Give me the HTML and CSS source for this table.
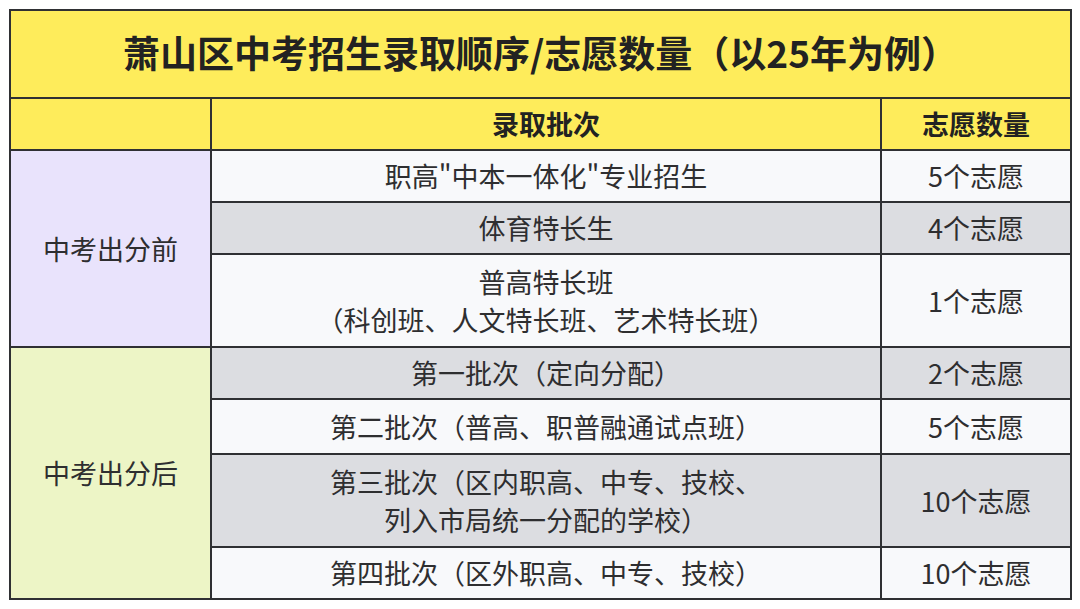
FILE: index.html
```html
<!DOCTYPE html>
<html lang="zh">
<head>
<meta charset="utf-8">
<link rel="stylesheet" href="styles.css">
</head>
<body>
<table class="sheet">
  <colgroup>
    <col class="c1"><col class="c2"><col class="c3">
  </colgroup>
  <tr class="title-row"><td colspan="3" class="title">萧山区中考招生录取顺序/志愿数量（以25年为例）</td></tr>
  <tr class="head-row"><td class="head"></td><td class="head">录取批次</td><td class="head">志愿数量</td></tr>
  <tr class="r1">
    <td rowspan="3" class="group before">中考出分前</td>
    <td class="w">职高"中本一体化"专业招生</td><td class="w">5个志愿</td>
  </tr>
  <tr class="r1"><td class="g">体育特长生</td><td class="g">4个志愿</td></tr>
  <tr class="r2"><td class="w">普高特长班<br>（科创班、人文特长班、艺术特长班）</td><td class="w">1个志愿</td></tr>
  <tr class="r1">
    <td rowspan="4" class="group after">中考出分后</td>
    <td class="g">第一批次（定向分配）</td><td class="g">2个志愿</td>
  </tr>
  <tr class="r3"><td class="w">第二批次（普高、职普融通试点班）</td><td class="w">5个志愿</td></tr>
  <tr class="r2"><td class="g">第三批次（区内职高、中专、技校、<br>列入市局统一分配的学校）</td><td class="g">10个志愿</td></tr>
  <tr class="r1"><td class="w">第四批次（区外职高、中专、技校）</td><td class="w">10个志愿</td></tr>
</table>
</body>
</html>
```

FILE: styles.css
```css
html, body {
  margin: 0;
  padding: 0;
  background: #ffffff;
}
body {
  padding: 9px 0 0 9px;
  width: 1080px;
  height: 609px;
  box-sizing: border-box;
  overflow: hidden;
  font-family: "Noto Sans CJK SC", "Noto Sans", sans-serif;
}
.sheet {
  border-collapse: collapse;
  width: 1063px;
  table-layout: fixed;
  color: #2e2e30;
}
.c1 { width: 201px; }
.c2 { width: 670px; }
.c3 { width: 190px; }
.sheet td {
  border: 2px solid #2f3033;
  text-align: center;
  vertical-align: middle;
  padding: 0;
  font-size: 27px;
  line-height: 38px;
}
.title-row { height: 88px; }
.head-row { height: 52px; }
.r1 { height: 52px; }
.r2 { height: 93px; }
.r3 { height: 55px; }
.sheet td.title {
  background: #feec5b;
  font-size: 37px;
  font-weight: 700;
  color: #222222;
  padding-bottom: 4px;
}
.sheet td.head {
  background: #feec5b;
  font-size: 27px;
  font-weight: 700;
  color: #222222;
}
.sheet td.group { font-size: 27px; }
.before { background: #e9e3fc; }
.after { background: #edf5c6; }
.w { background: #f8f9fb; }
.g { background: #dcdde1; }
```
